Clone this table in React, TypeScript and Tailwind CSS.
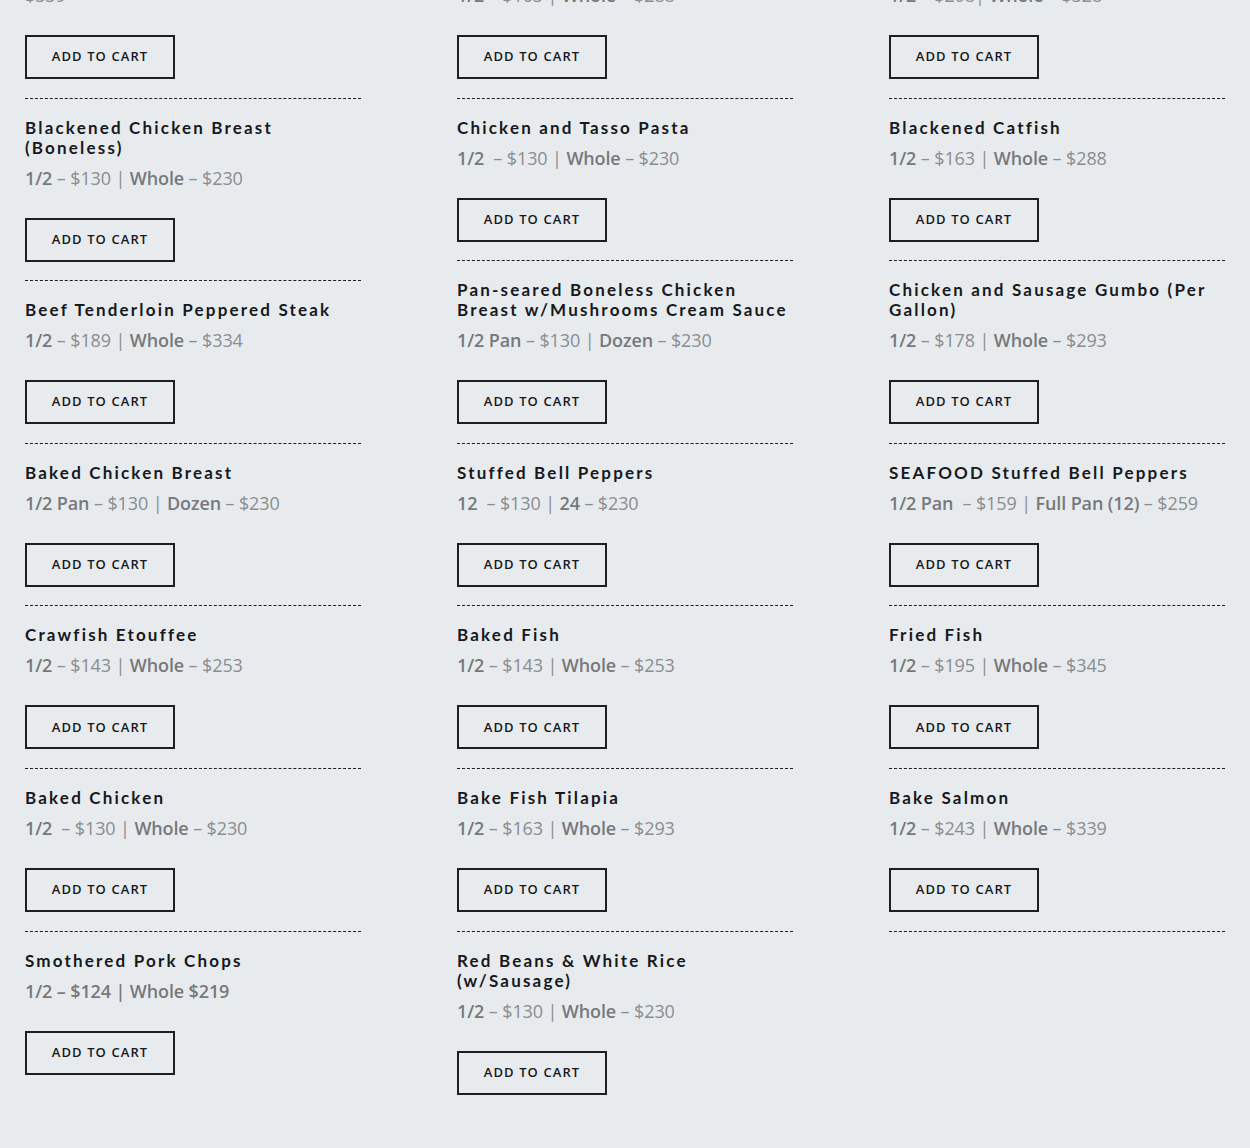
import React from "react";

type Seg = { t: string; b?: boolean };
type Item = { title?: string; price: Seg[]; border?: boolean; top?: boolean };

const P = (s: string): Seg[] => {
  // tokens wrapped in * are bold
  const out: Seg[] = [];
  const parts = s.split("*");
  parts.forEach((p, i) => {
    if (p.length) out.push({ t: p, b: i % 2 === 1 });
  });
  return out;
};

const NB = "\u00a0";

const col1: Item[] = [
  { top: true, price: P("$339"), border: true },
  { title: "Blackened Chicken Breast\n(Boneless)", price: P("*1/2* – $130 | *Whole* – $230"), border: true },
  { title: "Beef Tenderloin Peppered Steak", price: P("*1/2* – $189 | *Whole* – $334"), border: true },
  { title: "Baked Chicken Breast", price: P("*1/2 Pan* – $130 | *Dozen* – $230"), border: true },
  { title: "Crawfish Etouffee", price: P("*1/2* – $143 | *Whole* – $253"), border: true },
  { title: "Baked Chicken", price: P(`*1/2*${NB} – $130 | *Whole* – $230`), border: true },
  { title: "Smothered Pork Chops", price: P("*1/2 – $124 | Whole $219*"), border: false },
];

const col2: Item[] = [
  { top: true, price: P("*1/2* – $163 | *Whole* – $288"), border: true },
  { title: "Chicken and Tasso Pasta", price: P(`*1/2*${NB} – $130 | *Whole* – $230`), border: true },
  { title: "Pan-seared Boneless Chicken\nBreast w/Mushrooms Cream Sauce", price: P("*1/2 Pan* – $130 | *Dozen* – $230"), border: true },
  { title: "Stuffed Bell Peppers", price: P(`*12*${NB} – $130 | *24* – $230`), border: true },
  { title: "Baked Fish", price: P("*1/2* – $143 | *Whole* – $253"), border: true },
  { title: "Bake Fish Tilapia", price: P("*1/2* – $163 | *Whole* – $293"), border: true },
  { title: "Red Beans & White Rice\n(w/Sausage)", price: P("*1/2* – $130 | *Whole* – $230"), border: false },
];

const col3: Item[] = [
  { top: true, price: P("*1/2* – $208| *Whole* – $328"), border: true },
  { title: "Blackened Catfish", price: P("*1/2* – $163 | *Whole* – $288"), border: true },
  { title: "Chicken and Sausage Gumbo (Per\nGallon)", price: P("*1/2* – $178 | *Whole* – $293"), border: true },
  { title: "SEAFOOD Stuffed Bell Peppers", price: P(`*1/2 Pan*${NB} – $159 | *Full Pan (12)* – $259`), border: true },
  { title: "Fried Fish", price: P("*1/2* – $195 | *Whole* – $345"), border: true },
  { title: "Bake Salmon", price: P("*1/2* – $243 | *Whole* – $339"), border: true },
];

function Price({ segs }: { segs: Seg[] }) {
  return (
    <p className="text-[18px] leading-[28px] tracking-[-0.12px] text-[#8a8d90] whitespace-pre-wrap">
      {segs.map((s, i) =>
        s.b ? (
          <span key={i} className="font-semibold text-[#76797c]">
            {s.t}
          </span>
        ) : (
          <span key={i}>{s.t}</span>
        )
      )}
    </p>
  );
}

function Card({ item }: { item: Item }) {
  return (
    <div
      className={
        (item.top ? "-mt-[19px] " : "pt-[19px] ") +
        (item.border ? "border-b border-dashed border-[#1b1e22] pb-[18.6px]" : "pb-[18.6px]")
      }
    >
      {item.title && (
        <h3 className="font-['Lato',sans-serif] text-[17px] leading-[20px] font-bold tracking-[2.18px] text-[#16191d] mb-[6px] whitespace-pre">
          {item.title}
        </h3>
      )}
      <Price segs={item.price} />
      <button className="mt-[26px] flex h-[44px] w-[150px] items-center justify-center border-2 border-[#1b1e22] bg-transparent text-[13px] font-semibold uppercase tracking-[1.1px] text-[#15181c]">
        Add to cart
      </button>
    </div>
  );
}

export default function App() {
  return (
    <div className="h-[1148px] overflow-hidden bg-[#e8ebee] font-['Open_Sans',sans-serif]">
      <div className="grid grid-cols-3 items-start gap-x-[96px] px-[25px]">
        {[col1, col2, col3].map((col, ci) => (
          <div key={ci} className="flex flex-col">
            {col.map((it, i) => (
              <Card key={i} item={it} />
            ))}
          </div>
        ))}
      </div>
    </div>
  );
}
